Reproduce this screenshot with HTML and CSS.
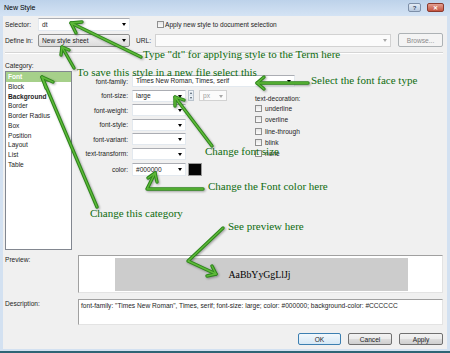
FILE: index.html
```html
<!DOCTYPE html>
<html lang="en">
<head>
  <meta charset="UTF-8" />
  <title>New Style</title>
  <link rel="stylesheet" href="styles.css">
</head>
<body>
  <div class="window">
    <div class="titlebar">
      <span class="title">New Style</span>
      <div class="caption-buttons">
        <span class="cap-btn help">?</span>
        <span class="cap-btn close">&#x2715;</span>
      </div>
    </div>

    <div class="dialog">
      <div class="row">
        <span class="lbl">Selector:</span>
        <div class="combo selector">dt</div>
        <span class="check apply-check"></span>
        <span class="check-text">Apply new style to document selection</span>
      </div>
      <div class="row row-define">
        <span class="lbl">Define in:</span>
        <div class="combo dropdown selector">New style sheet</div>
        <span class="lbl url-lbl">URL:</span>
        <div class="combo url disabled"></div>
        <button class="btn browse" disabled>Browse...</button>
      </div>
      <div class="separator"></div>

      <div class="main">
        <div class="category">
          <div class="cat-lbl">Category:</div>
          <ul class="cat-list">
            <li class="selected">Font</li>
            <li>Block</li>
            <li class="bold">Background</li>
            <li>Border</li>
            <li>Border Radius</li>
            <li>Box</li>
            <li>Position</li>
            <li>Layout</li>
            <li>List</li>
            <li>Table</li>
          </ul>
        </div>

        <div class="props">
          <div class="field">
            <span class="plabel">font-family:</span>
            <div class="combo family">Times New Roman, Times, serif</div>
          </div>
          <div class="props-body">
            <div class="fields">
              <div class="field">
                <span class="plabel">font-size:</span>
                <div class="combo short">large</div>
                <div class="spinner"><span class="up"></span><span class="down"></span></div>
                <div class="combo unit disabled">px</div>
              </div>
              <div class="field">
                <span class="plabel">font-weight:</span>
                <div class="combo short"></div>
              </div>
              <div class="field">
                <span class="plabel">font-style:</span>
                <div class="combo short"></div>
              </div>
              <div class="field">
                <span class="plabel">font-variant:</span>
                <div class="combo short"></div>
              </div>
              <div class="field">
                <span class="plabel">text-transform:</span>
                <div class="combo short"></div>
              </div>
              <div class="field color-field">
                <span class="plabel">color:</span>
                <div class="combo short">#000000</div>
                <span class="swatch"></span>
              </div>
            </div>

            <div class="decoration">
              <div class="deco-lbl">text-decoration:</div>
              <div class="deco-item"><span class="check"></span>underline</div>
              <div class="deco-item"><span class="check"></span>overline</div>
              <div class="deco-item"><span class="check"></span>line-through</div>
              <div class="deco-item"><span class="check"></span>blink</div>
              <div class="deco-item"><span class="check"></span>none</div>
            </div>
          </div>
        </div>
      </div>

      <div class="preview-row">
        <span class="side-lbl">Preview:</span>
        <div class="preview-box">
          <div class="preview-sample">AaBbYyGgLlJj</div>
        </div>
      </div>

      <div class="desc-row">
        <span class="side-lbl">Description:</span>
        <div class="desc-box">font-family: "Times New Roman", Times, serif; font-size: large; color: #000000; background-color: #CCCCCC</div>
      </div>

      <div class="buttons">
        <button class="btn ok">OK</button>
        <button class="btn cancel">Cancel</button>
        <button class="btn apply">Apply</button>
      </div>
    </div>

    <!-- annotations drawn over the dialog -->
    <span class="note note-selector">Type "dt" for applying style to the Term here</span>
    <span class="note note-save">To save this style in a new file select this</span>
    <span class="note note-face">Select the font face type</span>
    <span class="note note-size">Change font size</span>
    <span class="note note-color">Change the Font color here</span>
    <span class="note note-category">Change this category</span>
    <span class="note note-preview">See preview here</span>

    <svg class="arrows" width="450" height="353" viewBox="0 0 450 353">
      <defs>
        <g id="arrow-set">
          <polyline points="141,57 71,23" />
          <polyline points="82,22 71,23 76,33" />
          <polyline points="74,68 62,47" />
          <polyline points="61,55 62,47 69,50" />
          <polyline points="97,207 42,77" />
          <polyline points="53,82 42,77 46,88" />
          <polyline points="308,83 257,83" />
          <polyline points="264,77 257,83 264,89" />
          <polyline points="212,146 175,97" />
          <polyline points="184,100 175,97 175,106" />
          <polyline points="203,189 147,189 155,173" />
          <polyline points="148,178 155,173 157,182" />
          <polyline points="223,228 188,261 216,274" />
          <polyline points="212,266 216,274 207,276" />
        </g>
      </defs>
      <use href="#arrow-set" class="arrow-outer" />
      <use href="#arrow-set" class="arrow-inner" />
    </svg>
  </div>
</body>
</html>
```

FILE: styles.css
```css
* {
  box-sizing: border-box;
}
body {
  margin: 0;
  font-family: "Liberation Sans", Arial, sans-serif;
  font-size: 6.6px;
  color: #1e1e1e;
  background: #2f6475;
}
.window {
  position: relative;
  width: 450px;
  height: 353px;
  background: #d3e1f1;
  border-bottom: 2px solid #2f6475;
  overflow: hidden;
}
.titlebar {
  height: 16px;
  display: flex;
  justify-content: space-between;
  padding: 0 6px 0 4px;
  background: linear-gradient(#bdd2ea, #d4e3f4);
}
.title {
  font-size: 7px;
  color: #000;
  line-height: 15px;
}
.caption-buttons {
  display: flex;
  gap: 6px;
  margin-top: 3px;
}
.cap-btn {
  height: 9px;
  border: 1px solid #7d8fa8;
  border-radius: 2px;
  display: flex;
  align-items: center;
  justify-content: center;
  font-size: 6px;
  font-weight: bold;
  line-height: 1;
}
.help {
  width: 13px;
  background: linear-gradient(#e4ecf6, #b7c9df);
  color: #34465e;
}
.close {
  width: 17px;
  background: linear-gradient(#e3a092, #c4533f);
  border-color: #8b3a2e;
  color: #fff;
}

.dialog {
  height: 333px;
  margin: 0 3px;
  padding: 2px 4px 0 2px;
  background: #f0f0f0;
}
.row {
  display: flex;
  align-items: center;
  height: 13px;
}
.row + .row {
  margin-top: 2px;
}
.row-define {
  height: 14px;
}
.lbl {
  width: 33px;
  flex: none;
}
.combo {
  position: relative;
  flex: none;
  height: 12px;
  padding-left: 3px;
  line-height: 10px;
  background: #fff;
  border: 1px solid #e3e9ef;
  border-top-color: #abadb3;
  white-space: nowrap;
}
.combo::after {
  content: "";
  position: absolute;
  right: 3px;
  top: 4px;
  border-left: 2.5px solid transparent;
  border-right: 2.5px solid transparent;
  border-top: 3px solid #000;
}
.selector {
  width: 92px;
  height: 13px;
  line-height: 11px;
}
.dropdown {
  background: linear-gradient(#f3f3f3, #dcdcdc);
  border: 1px solid #8e8f8f;
  border-radius: 2px;
}
.disabled {
  color: #a0a0a0;
  background: #fbfbfb;
  border: 1px solid #d2d2d2;
}
.disabled::after {
  border-top-color: #a8a8a8;
}
.url-lbl {
  width: 19px;
  margin-left: 6px;
}
.url {
  width: 236px;
  height: 13px;
}
.check {
  display: inline-block;
  flex: none;
  width: 7px;
  height: 7px;
  border: 1px solid #8f8f8f;
  background: linear-gradient(#e6e6e6, #fbfbfb);
}
.apply-check {
  margin-left: 27px;
  margin-right: 1px;
}
.btn {
  height: 12px;
  padding: 0;
  font-family: inherit;
  font-size: 6.6px;
  color: #1e1e1e;
  border: 1px solid #707070;
  border-radius: 2px;
  background: linear-gradient(#f2f2f2 0%, #ebebeb 50%, #dddddd 51%, #cfcfcf 100%);
}
.browse {
  width: 45px;
  height: 14px;
  margin-left: 7px;
  color: #8a8a8a;
  background: #f4f4f4;
  border-color: #adb2b5;
}
.separator {
  margin-top: 5px;
  height: 2px;
  border-top: 1px solid #d5d5d5;
  border-bottom: 1px solid #fff;
}

.main {
  display: flex;
  gap: 6px;
  height: 196px;
}
.category {
  width: 67px;
  flex: none;
}
.cat-lbl {
  margin-top: 7px;
  margin-bottom: 1px;
  line-height: 9px;
}
.cat-list {
  list-style: none;
  margin: 0;
  padding: 0;
  height: 179px;
  background: #fff;
  border: 1px solid #828790;
}
.cat-list li {
  height: 9.75px;
  line-height: 9.75px;
  padding-left: 2px;
}
.cat-list .selected {
  background: #a6d08a;
  color: #fff;
  font-weight: bold;
}
.cat-list .bold {
  font-weight: bold;
}

.props {
  width: 365px;
  padding-top: 21px;
}
.field {
  display: flex;
  align-items: center;
  height: 12px;
}
.plabel {
  width: 50px;
  margin-right: 4px;
  text-align: right;
  flex: none;
}
.family {
  width: 163px;
}
.props-body {
  display: flex;
  margin-top: 2.6px;
}
.fields {
  width: 149px;
  display: flex;
  flex-direction: column;
  gap: 2.6px;
}
.short {
  width: 54px;
}
.color-field {
  height: 13px;
}
.color-field .short {
  height: 13px;
  line-height: 11px;
}
.spinner {
  display: flex;
  flex-direction: column;
  width: 6px;
  height: 11px;
  margin-left: 2px;
  border: 1px solid #b8c2cc;
}
.spinner span {
  position: relative;
  flex: 1;
  background: linear-gradient(#f4f7fa, #d9e3ec);
}
.spinner .up::after,
.spinner .down::after {
  content: "";
  position: absolute;
  left: 0.5px;
  border-left: 1.5px solid transparent;
  border-right: 1.5px solid transparent;
}
.spinner .up::after {
  top: 1px;
  border-bottom: 2px solid #4a5a6a;
}
.spinner .down::after {
  top: 1.5px;
  border-top: 2px solid #4a5a6a;
}
.unit {
  width: 28px;
  height: 11px;
  margin-left: 5px;
  line-height: 9px;
}
.swatch {
  width: 14px;
  height: 13px;
  margin-left: 2px;
  background: #050505;
  border: 1px solid #9a9a9a;
}
.decoration {
  margin-left: 28px;
  padding-top: 4px;
}
.deco-lbl {
  line-height: 9px;
}
.deco-item {
  display: flex;
  align-items: center;
  gap: 3px;
  height: 11.4px;
}

.preview-row,
.desc-row {
  display: flex;
  margin-top: 5px;
}
.desc-row {
  margin-top: 6px;
}
.side-lbl {
  width: 73px;
  flex: none;
  line-height: 9px;
}
.preview-box {
  width: 365px;
  height: 38px;
  padding: 2px 34px 1px 36px;
  background: #fff;
  border: 1px solid #e3e3e3;
  border-top-color: #a0a0a0;
  border-left-color: #a0a0a0;
}
.preview-sample {
  height: 100%;
  display: flex;
  align-items: center;
  justify-content: center;
  padding-right: 4px;
  background: #cccccc;
  font-family: "Liberation Serif", "Times New Roman", serif;
  font-size: 9.8px;
  color: #000;
}
.desc-box {
  width: 365px;
  height: 26px;
  padding: 1px 2px;
  line-height: 9px;
  background: #fff;
  border: 1px solid #e3e3e3;
  border-top-color: #a0a0a0;
  border-left-color: #a0a0a0;
  white-space: nowrap;
  overflow: hidden;
}
.buttons {
  display: flex;
  justify-content: flex-end;
  gap: 7px;
  margin-top: 8px;
}
.ok {
  width: 43px;
  border-color: #3c7fb1;
  background: linear-gradient(#f2f8fc, #d6e8f5);
}
.cancel,
.apply {
  width: 44px;
}

.note {
  position: absolute;
  font-family: "Liberation Serif", "Times New Roman", serif;
  font-size: 11px;
  line-height: 12px;
  color: #0f6c0f;
  white-space: nowrap;
}
.note-selector { left: 143px; top: 47.5px; }
.note-save { left: 77px; top: 66px; }
.note-face { left: 311px; top: 73.5px; }
.note-size { left: 205px; top: 145px; }
.note-color { left: 208px; top: 179.5px; }
.note-category { left: 90px; top: 207px; }
.note-preview { left: 228px; top: 219.5px; }

.arrows {
  position: absolute;
  left: 0;
  top: 0;
  pointer-events: none;
  filter: drop-shadow(1px 1px 1px rgba(0, 0, 0, 0.35));
}
.arrows polyline {
  fill: none;
  stroke-linecap: round;
  stroke-linejoin: round;
}
.arrow-outer {
  stroke: #2c861a;
  stroke-width: 3.4;
}
.arrow-inner {
  stroke: #5fb93a;
  stroke-width: 1.4;
}
```
